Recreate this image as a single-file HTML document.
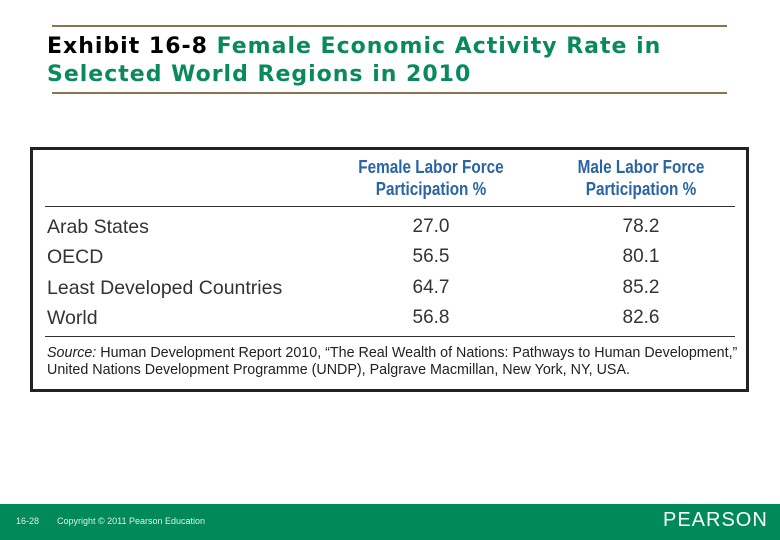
<!DOCTYPE html>
<html><head><meta charset="utf-8"><style>
*{margin:0;padding:0}
body{width:780px;height:540px;position:relative;background:#fff;overflow:hidden;font-family:"Liberation Sans",sans-serif}
.a{position:absolute;white-space:nowrap}
.hr{position:absolute;left:52px;width:675px;height:2px;background:#8b7350}
.title{font-family:"DejaVu Sans",sans-serif;font-weight:bold;font-size:22px;letter-spacing:1px;color:#0a8a5c}
.box{position:absolute;left:30px;top:147px;width:713px;height:239px;border:3px solid #222}
.hd{color:#2a64a4;font-weight:bold;font-size:18px;text-align:center;line-height:22px;transform:scaleX(0.85)}
.r{font-size:19.5px;color:#333}
.n{font-size:19px;color:#333;width:80px;text-align:center}
.line{position:absolute;left:45px;width:690px;height:1px;background:#333}
.src{font-size:14.3px;color:#222}
.foot{position:absolute;left:0;top:504px;width:780px;height:36px;background:#008a5a}
</style></head><body>
<div class="hr" style="top:25px"></div>
<div class="a title" style="left:47px;top:34px"><span style="color:#000">Exhibit 16-8</span> Female Economic Activity Rate in</div>
<div class="a title" style="left:47px;top:62px">Selected World Regions in 2010</div>
<div class="hr" style="top:92px"></div>
<div class="box"></div>
<div class="a hd" style="left:341px;top:156px;width:180px">Female Labor Force<br>Participation %</div>
<div class="a hd" style="left:551px;top:156px;width:180px">Male Labor Force<br>Participation %</div>
<div class="line" style="top:206px"></div>
<div class="a r" style="left:47px;top:216px">Arab States</div>
<div class="a r" style="left:47px;top:246px">OECD</div>
<div class="a r" style="left:47px;top:277px">Least Developed Countries</div>
<div class="a r" style="left:47px;top:307px">World</div>
<div class="a n" style="left:391px;top:216px">27.0</div>
<div class="a n" style="left:391px;top:246px">56.5</div>
<div class="a n" style="left:391px;top:277px">64.7</div>
<div class="a n" style="left:391px;top:307px">56.8</div>
<div class="a n" style="left:601px;top:216px">78.2</div>
<div class="a n" style="left:601px;top:246px">80.1</div>
<div class="a n" style="left:601px;top:277px">85.2</div>
<div class="a n" style="left:601px;top:307px">82.6</div>
<div class="line" style="top:336px"></div>
<div class="a src" style="left:47px;top:345px"><i>Source:</i> Human Development Report 2010, “The Real Wealth of Nations: Pathways to Human Development,”</div>
<div class="a src" style="left:47px;top:362px">United Nations Development Programme (UNDP), Palgrave Macmillan, New York, NY, USA.</div>
<div class="foot"></div>
<div class="a" style="left:16px;top:516px;font-size:9px;color:#e0f0e8">16-28</div>
<div class="a" style="left:57px;top:516px;font-size:9px;color:#e0f0e8">Copyright © 2011 Pearson Education</div>
<div class="a" style="left:663px;top:509px;font-size:20px;letter-spacing:1px;color:#fff">PEARSON</div>
</body></html>
